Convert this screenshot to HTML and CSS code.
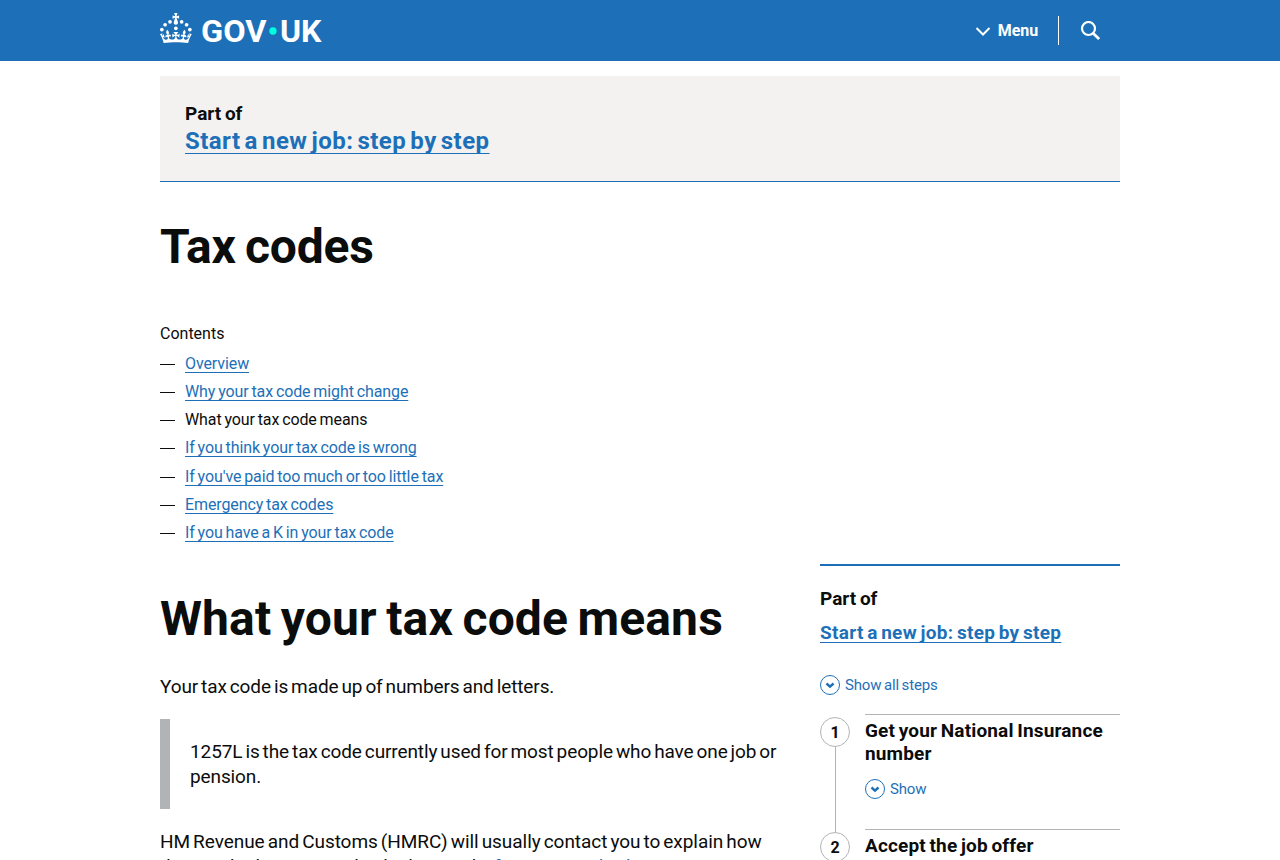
FILE: index.html
```html
<!DOCTYPE html>
<html lang="en">
<head>
<meta charset="utf-8">
<title>Tax codes: What your tax code means - GOV.UK</title>
<link rel="stylesheet" href="styles.css">
</head>
<body>
<header class="header">
  <div class="container header-inner">
    <a href="#" class="logo" aria-label="GOV.UK">
      <svg width="162" height="30" viewBox="0 0 324 60" fill="#fff">
        <circle cx="20" cy="17.6" r="3.7"/>
        <circle cx="10.2" cy="23.5" r="3.7"/>
        <circle cx="3.7" cy="33.2" r="3.7"/>
        <circle cx="31.7" cy="30.6" r="3.7"/>
        <circle cx="43.3" cy="17.6" r="3.7"/>
        <circle cx="53.2" cy="23.5" r="3.7"/>
        <circle cx="59.7" cy="33.2" r="3.7"/>
        <path d="M33.1,9.8c.2-.1.3-.3.5-.5l4.6,2.4v-6.8l-4.6,1.5c-.1-.2-.3-.3-.5-.5l1.9-5.9h-6.7l1.9,5.9c-.2.1-.3.3-.5.5l-4.6-1.5v6.8l4.6-2.4c.1.2.3.3.5.5l-2.6,8c-.9,2.8,1.2,5.7,4.1,5.7h0c3,0,5.1-2.9,4.1-5.7l-2.6-8ZM37,37.9s-3.4,3.8-4.1,6.1c2.2,0,4.2-.5,6.4-2.8l-.7,8.5c-2-2.8-4.4-4.1-5.7-3.8.1,3.1.5,6.7,5.8,7.2,3.7.3,6.7-1.5,7-3.8.4-2.6-2-4.3-3.7-1.6-1.4-4.5,2.4-6.1,4.9-3.2-1.9-4.5-1.8-7.7,2.4-10.9,3,4,2.6,7.3-1.2,11.1,2.4-1.3,6.2,0,4,4.6-1.2-2.8-3.7-2.2-4.2.2-.3,1.7.7,3.7,3,4.2,1.9.3,4.7-.9,7-5.9-1.3,0-2.4.7-3.9,1.7l2.4-8c.6,2.3,1.4,3.7,2.2,4.5.6-1.6.5-2.8,0-5.3l5,1.8c-2.6,3.6-5.2,8.7-7.3,17.5-7.4-1.1-15.7-1.7-24.5-1.7h0c-8.8,0-17.1.6-24.5,1.7-2.1-8.9-4.7-13.9-7.3-17.5l5-1.8c-.5,2.5-.6,3.7,0,5.3.8-.8,1.6-2.3,2.2-4.5l2.4,8c-1.5-1-2.6-1.7-3.9-1.7,2.3,5,5.2,6.2,7,5.9,2.3-.4,3.3-2.4,3-4.2-.5-2.4-3-3.1-4.2-.2-2.2-4.6,1.6-6,4-4.6-3.7-3.7-4.2-7.1-1.2-11.1,4.2,3.2,4.3,6.4,2.4,10.9,2.5-2.8,6.3-1.3,4.9,3.2-1.8-2.7-4.1-1-3.7,1.6.3,2.3,3.3,4.1,7,3.8,5.4-.5,5.7-4.2,5.8-7.2-1.3-.2-3.7,1-5.7,3.8l-.7-8.5c2.2,2.3,4.2,2.7,6.4,2.8-.7-2.3-4.1-6.1-4.1-6.1h10.6,0Z"/>
        <text class="logo-text" x="82" y="57" textLength="131" lengthAdjust="spacingAndGlyphs">GOV</text>
        <circle class="logo-dot" cx="226" cy="36" r="7.3"/>
        <text class="logo-text" x="240" y="57" textLength="83" lengthAdjust="spacingAndGlyphs">UK</text>
      </svg>
    </a>
    <nav class="header-nav">
      <a href="#" class="menu">
        <svg width="16" height="10" viewBox="0 0 16 10" fill="none" stroke="#fff" stroke-width="2"><path d="M1.500 2 8 8.500 14.500 2"/></svg>
        <span>Menu</span>
      </a>
      <a href="#" class="search" aria-label="Search">
        <svg width="20" height="20" viewBox="0 0 20 20" fill="none" stroke="#fff"><circle cx="8.500" cy="7.500" r="6.500" stroke-width="2.200"/><path d="m12.900 11.900 6.200 6.200" stroke-width="2.800"/></svg>
      </a>
    </nav>
  </div>
</header>

<div class="container">
  <div class="step-header">
    <span class="step-header-label">Part of</span>
    <a href="#" class="step-header-link">Start a new job: step by step</a>
  </div>

  <div class="columns">
    <main class="main">
      <h1 class="title">Tax codes</h1>
      <nav class="contents">
        <h2 class="contents-title">Contents</h2>
        <ol class="contents-list">
          <li><a href="#">Overview</a></li>
          <li><a href="#">Why your tax code might change</a></li>
          <li>What your tax code means</li>
          <li><a href="#">If you think your tax code is wrong</a></li>
          <li><a href="#">If you've paid too much or too little tax</a></li>
          <li><a href="#">Emergency tax codes</a></li>
          <li><a href="#">If you have a K in your tax code</a></li>
        </ol>
      </nav>
      <h1 class="title part-title">What your tax code means</h1>
      <div class="body-text">
        <p>Your tax code is made up of numbers and letters.</p>
        <div class="inset"><p>1257L is the tax code currently used for most people who have one job or pension.</p></div>
        <p class="contact">HM Revenue and Customs (HMRC) will usually contact you to explain how<br>they worked out your individual tax code <a href="#">if your tax code changes</a>.</p>
      </div>
    </main>

    <aside class="sidebar">
      <h2 class="sidebar-title">Part of</h2>
      <a href="#" class="sidebar-link">Start a new job: step by step</a>
      <button class="toggle show-all">
        <svg width="20" height="20" viewBox="0 0 20 20" fill="none" stroke="#1d70b8"><circle cx="10" cy="10" r="9.500"/><path d="m6.500 8.500 3.500 3.200 3.500-3.200" stroke-width="2.400"/></svg>
        <span>Show all steps</span>
      </button>
      <ol class="steps">
        <li class="step">
          <span class="step-number">1</span>
          <div class="step-content">
            <h3>Get your National Insurance<br>number</h3>
            <button class="toggle">
              <svg width="20" height="20" viewBox="0 0 20 20" fill="none" stroke="#1d70b8"><circle cx="10" cy="10" r="9.500"/><path d="m6.500 8.500 3.500 3.200 3.500-3.200" stroke-width="2.400"/></svg>
              <span>Show</span>
            </button>
          </div>
        </li>
        <li class="step">
          <span class="step-number">2</span>
          <div class="step-content">
            <h3>Accept the job offer</h3>
          </div>
        </li>
      </ol>
    </aside>
  </div>
</div>
</body>
</html>
```
FILE: styles.css
```css
* {
  box-sizing: border-box;
}
html,
body {
  height: 860px;
  overflow: hidden;
}
body {
  margin: 0;
  color: #0b0c0c;
  background: #fff;
  font-family: Roboto, Arial, sans-serif;
  font-size: 19px;
}
h1, h2, h3, p, ol {
  margin: 0;
  padding: 0;
}
ol {
  list-style: none;
}
a {
  color: #1d70b8;
  text-decoration-thickness: 1px;
  text-decoration-skip-ink: none;
  text-underline-offset: 3px;
}
.container {
  width: 960px;
  margin: 0 auto;
}

/* header */
.header {
  height: 61px;
  background: #1d70b8;
}
.header-inner {
  display: flex;
  justify-content: space-between;
}
.logo {
  padding-top: 13px;
}
.logo svg {
  display: block;
  overflow: visible;
}
.logo-text {
  font-size: 61px;
  font-weight: 700;
}
.logo-dot {
  fill: #00ffe0;
}
.header-nav {
  display: flex;
  height: 29px;
  margin-top: 16px;
}
.menu {
  display: flex;
  align-items: center;
  gap: 7px;
  padding-right: 20px;
  border-right: 1px solid #fff;
  color: #fff;
  font-size: 16px;
  font-weight: 700;
  letter-spacing: -0.1px;
  text-decoration: none;
}
.search {
  padding: 5px 20px 0 21px;
}
.search svg {
  display: block;
}

/* step by step banner */
.step-header {
  height: 106px;
  margin-top: 15px;
  padding: 25px;
  background: #f3f2f1;
  border-bottom: 1px solid #1d70b8;
  font-weight: 700;
}
.step-header-label {
  display: block;
  line-height: 25px;
  word-spacing: -1px;
}
.step-header-link {
  font-size: 24px;
  line-height: 30px;
  letter-spacing: 0.45px;
  word-spacing: -2.3px;
  text-underline-offset: 4px;
}

.columns {
  display: flex;
  justify-content: space-between;
}
.main {
  width: 630px;
}
.title {
  margin-top: 40px;
  font-size: 48px;
  line-height: 50px;
  letter-spacing: -0.2px;
  word-spacing: -2.5px;
  white-space: nowrap;
}
.part-title {
  margin-top: 47px;
  letter-spacing: 0.12px;
}

/* contents list */
.contents {
  margin-top: 52px;
  font-size: 16px;
}
.contents-title {
  font-size: 16px;
  font-weight: 400;
  line-height: 20px;
}
.contents-list {
  padding-top: 6px;
  letter-spacing: -0.1px;
  word-spacing: -1px;
}
.contents-list li {
  display: flex;
  height: 28.150px;
  line-height: 28px;
}
.contents-list li::before {
  content: "";
  width: 15px;
  height: 1px;
  margin: 14px 10px 0 0;
  background: #0b0c0c;
}

.body-text {
  margin-top: 30px;
  letter-spacing: -0.11px;
  line-height: 25px;
  word-spacing: -1.6px;
}
.contact {
  letter-spacing: -0.05px;
}
.inset {
  margin: 20px 0;
  padding: 20px 0 20px 20px;
  border-left: 10px solid #b1b4b6;
}

/* sidebar */
.sidebar {
  width: 300px;
  margin-top: 382px;
  padding-top: 20px;
  border-top: 2px solid #1d70b8;
}
.sidebar-title {
  font-size: 19px;
  line-height: 25px;
  word-spacing: -1px;
}
.sidebar-link {
  display: block;
  margin-top: 9px;
  font-weight: 700;
  letter-spacing: 0.3px;
  line-height: 25px;
  word-spacing: -1.5px;
}
.toggle {
  display: flex;
  align-items: center;
  gap: 5px;
  height: 20px;
  padding: 0;
  border: 0;
  background: none;
  color: #1d70b8;
  font: 15px/20px Roboto, Arial, sans-serif;
  letter-spacing: -0.15px;
  word-spacing: -1px;
}
.show-all {
  margin-top: 30px;
}
.steps {
  margin-top: 19px;
}
.step {
  display: flex;
  gap: 15px;
  height: 115px;
}
.step-number {
  position: relative;
  width: 30px;
  height: 30px;
  margin-top: 3px;
  border: 1px solid #b1b4b6;
  border-radius: 50%;
  font-size: 16px;
  font-weight: 700;
  line-height: 29px;
  text-align: center;
}
/* line down to the next step */
.step-number::after {
  content: "";
  position: absolute;
  top: 29px;
  left: 14px;
  width: 1px;
  height: 85px;
  background: #b1b4b6;
}
.step-content {
  width: 255px;
  border-top: 1px solid #b1b4b6;
}
.step-content h3 {
  margin-top: 4px;
  font-size: 19px;
  letter-spacing: 0.15px;
  line-height: 23px;
  white-space: nowrap;
  word-spacing: -1.2px;
}
.step-content .toggle {
  margin-top: 14px;
}
```
